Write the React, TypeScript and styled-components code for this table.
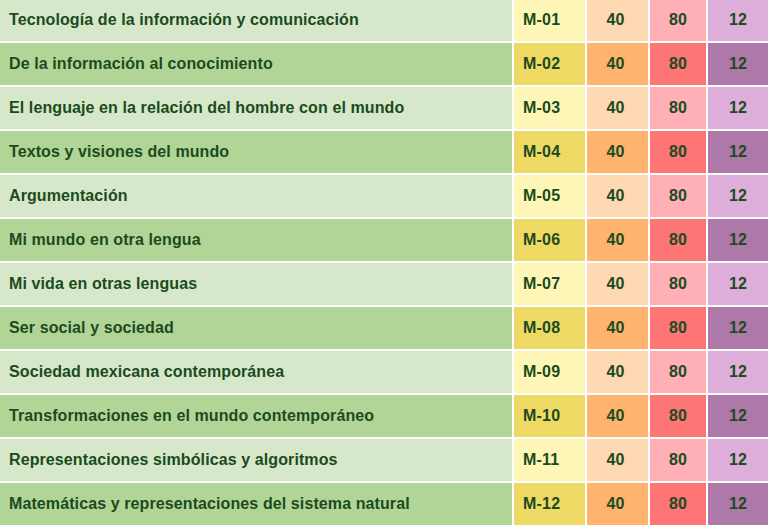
import styled, {createGlobalStyle} from "styled-components";

const GlobalStyle = createGlobalStyle`
  html, body {
    margin: 0;
    padding: 0;
    background: #ffffff;
  }
  body {
    font-family: "Liberation Sans", Arial, sans-serif;
  }
`;

type Tone = 'light' | 'dark';
type Column = 'name' | 'code' | 'hours' | 'total' | 'credits';

const palette: Record<Column, Record<Tone, string>> = {
  name: {light: '#d6e8c9', dark: '#b1d597'},
  code: {light: '#fdf6b7', dark: '#eed965'},
  hours: {light: '#fed8b2', dark: '#feb36f'},
  total: {light: '#feb0b6', dark: '#fe7575'},
  credits: {light: '#dcaed9', dark: '#ae78a8'},
};

const modules = [
  'Tecnología de la información y comunicación',
  'De la información al conocimiento',
  'El lenguaje en la relación del hombre con el mundo',
  'Textos y visiones del mundo',
  'Argumentación',
  'Mi mundo en otra lengua',
  'Mi vida en otras lenguas',
  'Ser social y sociedad',
  'Sociedad mexicana contemporánea',
  'Transformaciones en el mundo contemporáneo',
  'Representaciones simbólicas y algoritmos',
  'Matemáticas y representaciones del sistema natural',
];

const Table = styled.div`
  display: grid;
  grid-template-columns: 512px 71px 61px 56px 1fr;
  grid-auto-rows: 42px;
  gap: 2px;
  margin-top: -1px;
  width: 768px;
  background: #ffffff;
`;

const Cell = styled.div<{ $col: Column; $tone: Tone }>`
  display: flex;
  align-items: center;
  justify-content: ${({$col}) => ($col === 'name' || $col === 'code' ? 'flex-start' : 'center')};
  padding-left: ${({$col}) => ($col === 'name' || $col === 'code' ? '9px' : '0')};
  padding-right: ${({$col}) => ($col === 'hours' ? '4px' : '0')};
  background: ${({$col, $tone}) => palette[$col][$tone]};
  color: #1b4b1d;
  font-size: 16px;
  font-weight: 700;
  letter-spacing: ${({$col}) => ($col === 'name' ? '0.1px' : '0.2px')};
  white-space: nowrap;
  overflow: hidden;
`;

export default function App() {
  return (
    <>
      <GlobalStyle/>
      <Table>
        {modules.map((name, i) => {
          const tone: Tone = i % 2 === 0 ? 'light' : 'dark';
          const code = `M-${String(i + 1).padStart(2, '0')}`;
          return [
            <Cell key={`${code}-n`} $col="name" $tone={tone}>{name}</Cell>,
            <Cell key={`${code}-c`} $col="code" $tone={tone}>{code}</Cell>,
            <Cell key={`${code}-h`} $col="hours" $tone={tone}>40</Cell>,
            <Cell key={`${code}-t`} $col="total" $tone={tone}>80</Cell>,
            <Cell key={`${code}-k`} $col="credits" $tone={tone}>12</Cell>,
          ];
        })}
      </Table>
    </>
  );
}
